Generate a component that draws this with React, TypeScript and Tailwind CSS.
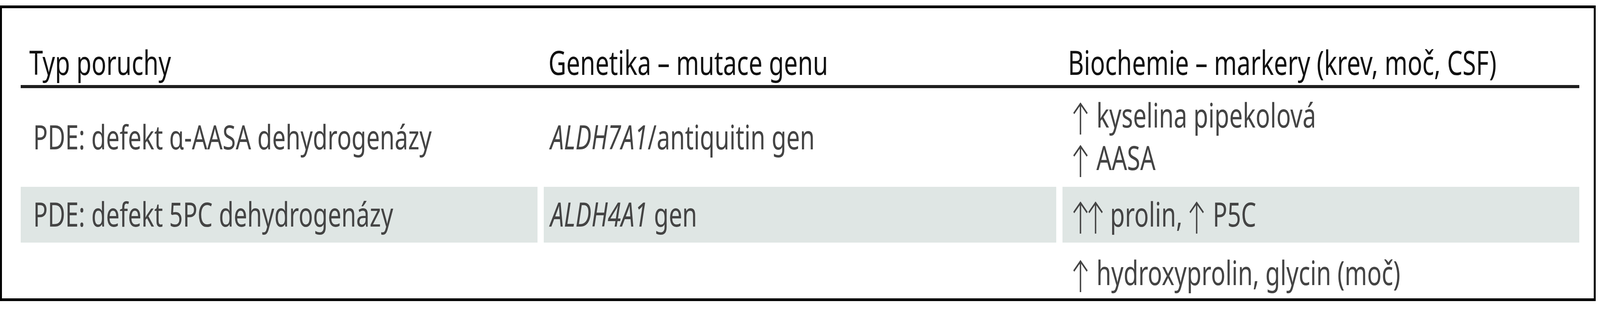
import React from "react";

const Up = ({ className = "" }: { className?: string }) => (
    <svg viewBox="0 0 56 82" preserveAspectRatio="none" className={`inline-block w-[56px] h-[82px] ${className}`}>
        <path d="M28 3 V82 M4 28 L28 3 L52 28" fill="none" stroke="#444" strokeWidth="5" />
    </svg>
);

const Line = ({ children }: { children: React.ReactNode }) => (
    <span className="inline-block origin-left scale-x-[0.715] whitespace-nowrap">{children}</span>
);

const Head = ({ children }: { children: React.ReactNode }) => (
    <span className="inline-block origin-left scale-x-[0.73] whitespace-nowrap">{children}</span>
);

export default function App() {
    const cols = "grid grid-cols-[1323px_1312px_1323px] gap-x-[16px]";
    const text = "font-['Noto_Sans',sans-serif] text-[86px] leading-[109px]";

    return (
        <div className="w-full h-[800px] bg-white pt-[14px] overflow-hidden">
            <div className={`w-[4085px] h-[758px] border-x-[5px] border-y-[7px] border-black pl-[48px] pr-[37px] ${text} text-[#444]`}>
                <div className={`${cols} h-[205px] border-b-[8px] border-[#1e1e1e] text-[#111]`}>
                    <div className="pt-[83px] pl-[22px]"><Head>Typ poruchy</Head></div>
                    <div className="pt-[83px] pl-[12px]"><Head>Genetika – mutace genu</Head></div>
                    <div className="pt-[83px] pl-[14px]"><Head>Biochemie – markery (krev, moč, CSF)</Head></div>
                </div>

                <div className={`${cols} h-[253px]`}>
                    <div className="pt-[69px] pl-[32px]"><Line>PDE: defekt α-AASA dehydrogenázy</Line></div>
                    <div className="pt-[69px] pl-[17px]"><Line><i>ALDH7A1</i>/antiquitin gen</Line></div>
                    <div className="pt-[13px] pl-[26px] flex flex-col items-start">
                        <Line><Up className="mr-[29px]" />kyselina pipekolová</Line>
                        <Line><Up className="mr-[29px]" />AASA</Line>
                    </div>
                </div>

                <div className={`${cols} h-[143px]`}>
                    <div className="bg-[#dfe6e4] pt-[14px] pl-[32px]"><Line>PDE: defekt 5PC dehydrogenázy</Line></div>
                    <div className="bg-[#dfe6e4] pt-[14px] pl-[17px]"><Line><i>ALDH4A1</i> gen</Line></div>
                    <div className="bg-[#dfe6e4] pt-[14px] pl-[26px]">
                        <Line><Up /><Up className="-ml-[2px] mr-[24px]" />prolin, <Up className="mr-[30px]" />P5C</Line>
                    </div>
                </div>

                <div className={`${cols} h-[143px]`}>
                    <div />
                    <div />
                    <div className="pt-[21px] pl-[26px]"><Line><Up className="mr-[29px]" />hydroxyprolin, glycin (moč)</Line></div>
                </div>
            </div>
        </div>
    );
}
